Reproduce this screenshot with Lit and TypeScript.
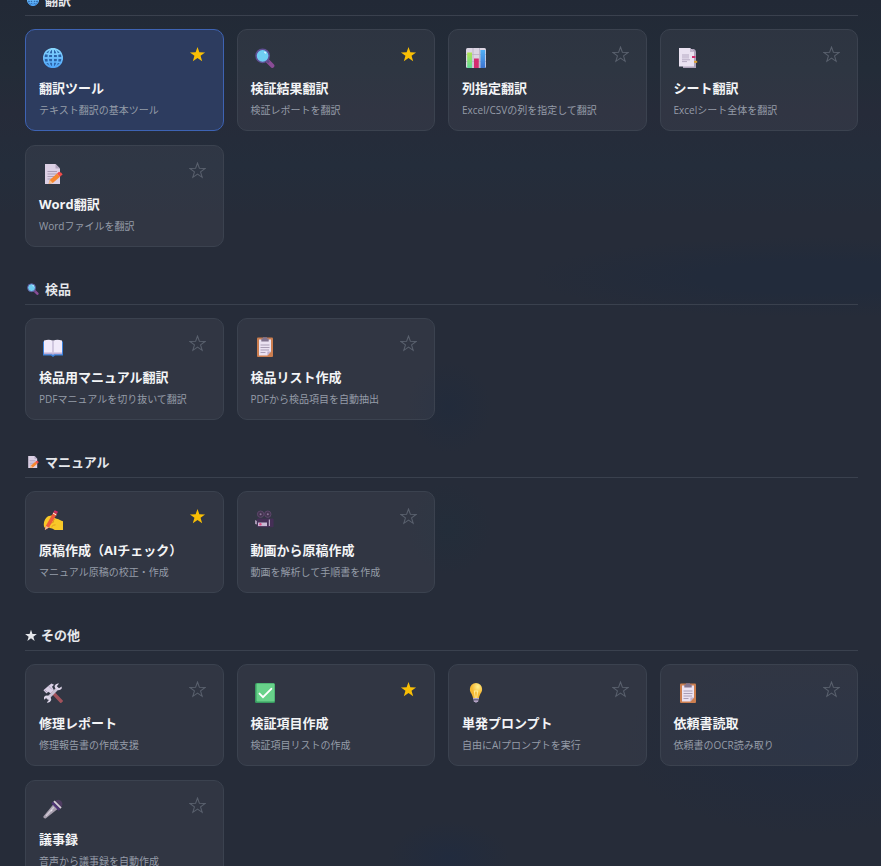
import { LitElement, html, css, svg } from "lit";
import { customElement, property, state } from "lit/decorators.js";
import { classMap } from "lit/directives/class-map.js";

const STAR = "10,1.2 12.2,7.4 18.9,7.6 13.6,11.6 15.5,18 10,14.2 4.5,18 6.4,11.6 1.1,7.6 7.8,7.4";

const icons: Record<string, unknown> = {
  globe: svg`
    <defs><linearGradient id="gl" x1="0" y1="0" x2="0" y2="1"><stop offset="0" stop-color="#86d6ff"/><stop offset="1" stop-color="#4fa6fa"/></linearGradient></defs>
    <circle cx="10" cy="10" r="9.4" fill="#2b62a8"/>
    <g fill="none" stroke="url(#gl)" stroke-width="1.6">
      <circle cx="10" cy="10" r="9.3"/><ellipse cx="10" cy="10" rx="4.8" ry="9.3"/>
      <path d="M1 10.01H19M2.4 5.4Q10 7.2 17.6 5.4M2.4 14.6Q10 12.8 17.6 14.6M10.01 1V19"/>
      <path d="M1 10H19V10.02M10 1V19H10.02"/>
    </g>`,
  search: svg`
    <path d="M12.6 13.1 17.3 17.8" stroke="#8a4c96" stroke-width="4.2" stroke-linecap="round"/>
    <path d="M12 12.6 14 14.4" stroke="#5d4a83" stroke-width="2.4"/>
    <circle cx="7.6" cy="7.8" r="6.6" fill="#6fcdf2" stroke="#604f95" stroke-width="1.5"/>
    <ellipse cx="10.2" cy="4.6" rx="1.3" ry=".8" fill="#d9f4ff" transform="rotate(35 10.2 4.6)"/>`,
  chart: svg`
    <defs><linearGradient id="cg" x1="0" y1="0" x2="0" y2="1"><stop offset="0" stop-color="#b0e34f"/><stop offset="1" stop-color="#5fdc9a"/></linearGradient>
    <linearGradient id="cb" x1="0" y1="0" x2="0" y2="1"><stop offset="0" stop-color="#4fb0f7"/><stop offset="1" stop-color="#3c73cf"/></linearGradient></defs>
    <rect width="20" height="20" rx="1.5" fill="#dcd5e3"/>
    <path d="M0 6.5H20M0 13.5H20M7 0V20M13.5 0V20" stroke="#b9afc4" stroke-width=".8"/>
    <rect x="1.2" y="4.5" width="4.8" height="15.5" fill="url(#cg)"/>
    <rect x="8" y="10.5" width="4.8" height="9.5" fill="#d42d70"/>
    <rect x="14.4" y="2" width="4.8" height="18" fill="url(#cb)"/>`,
  tabs: svg`
    <path d="M5 1H16Q18 2 18 4V20H5Z" fill="#afa3bb"/>
    <path d="M1 0H12L16 4V18.6H1Z" fill="#eae2f1"/>
    <path d="M12 0V4H16Z" fill="#c4b8cf"/>
    <rect x="4" y="6" width="7" height="4.6" fill="#cfc5d9"/>
    <path d="M4 11.8H12M4 13.6H9" stroke="#b7abc3"/>
    <rect x="14" y="8" width="3.4" height="2" fill="#d42d70"/><rect x="16" y="12.8" width="3.2" height="2" fill="#dba032"/>`,
  memo: svg`
    <path d="M2 0H12.5L17 4.5V20H2Z" fill="#dcd0e5"/>
    <path d="M12.5 0V4.5H17Z" fill="#b3a5c0"/>
    <path d="M4.5 7.5H14M4.5 10H14M4.5 12.5H12M4.5 15H9" stroke="#a99bb5"/>
    <path d="M5.6 19.8 6.8 16 14 9.6 17 12.8 9.8 19Z" fill="#f6862d"/>
    <path d="M14 9.6 16 7.8Q18.8 8.4 19.6 10.6L17 12.8Z" fill="#ef4c4a"/>
    <path d="M5.6 19.8 6.8 16 9.8 19Z" fill="#f4bf91"/>`,
  book: svg`
    <path d="M0 4.5H20V18.6H12L10 20 8 18.6H0Z" fill="#3b82dc"/>
    <path d="M1 3.5Q6 1.8 10 3.7Q14 1.8 19 3.5V16.6H1Z" fill="#f1eafa"/>
    <path d="M1 15.5H9L10 16.7 11 15.5H19V17.2H11L10 18 9 17.2H1Z" fill="#bdaed5"/>
    <path d="M9.2 3.6H10.8V16.5H9.2Z" fill="#cabfda"/>`,
  clipboard: svg`
    <rect x="2" y=".5" width="16" height="19.5" rx="1" fill="#cc7e4f"/>
    <path d="M4 2.6H16V14.6L12.4 18.4H4Z" fill="#ebe2f2"/>
    <path d="M16 14.6H12.4V18.4Z" fill="#bfafcd"/>
    <path d="M6.3 1.6H8V.2H12V1.6H13.7V4.6H6.3Z" fill="#83758f"/>
    <path d="M5.5 8H14.5M5.5 10.5H14.5M5.5 13H14M5.5 15.5H10.5" stroke="#aa9eb6"/>`,
  writing: svg`
    <path d="M1.3 17.4C-.2 13 1.6 8.8 5 6.3L9.6 5.2 10.4 7.4 13.6 8.7C16.3 9 17.7 10.6 20 11.2V20H11.8C8.4 17.3 4.4 17.6 1.3 17.4Z" fill="#f8c928"/>
    <path d="M5.6 15.2Q7.2 12.4 10.6 12.3M8.4 17Q10 14.7 12.5 14.8M12 8.7Q10 10 10.5 12" stroke="#df941e" stroke-width=".9" fill="none"/>
    <path d="M1.8 20 2.8 16 10.6 1.9 14 3.8 6 17.6Z" fill="#ed5b3b"/>
    <path d="M10.6 1.9 11.7.2 15 1.7 14 3.8Z" fill="#d12b65"/>
    <path d="M10 3.1 13.3 5" stroke="#f7ece8"/>
    <path d="M1.8 20 2.8 16 6 17.6Z" fill="#f2bc95"/>`,
  camera: svg`
    <circle cx="5.6" cy="4.2" r="3.2" fill="#443450" stroke="#5c466a"/><circle cx="12.8" cy="4.2" r="3.2" fill="#443450" stroke="#5c466a"/>
    <circle cx="5.6" cy="4.2" r="1" fill="#8a7797"/><circle cx="12.8" cy="4.2" r="1" fill="#8a7797"/>
    <rect x="2" y="8.6" width="16.6" height="8.6" rx="1" fill="#452f56"/>
    <path d="M0 10 2 11V14.5L0 14Z" fill="#a494b0"/><rect x="3" y="12.5" width="9" height="3.6" fill="#c9bad4"/>
    <path d="M13.8 9.5H15V16H13.8Z" fill="#b4a5c0"/>
    <circle cx="5.4" cy="14.2" r="1.2" fill="#dd4c83"/>`,
  tools: svg`
    <path d="M8 7.6 17.8 18" stroke="#a1525b" stroke-width="3.4" stroke-linecap="square"/>
    <path d="M.4 7.2 5.5 2.8 8.5.4 11 1.8 9 3.8 11 7.2 7.7 10.3 5 8.7 3.5 10.4Z" fill="#d9cfe5"/>
    <path d="M1.5 6.7 4.4 9.4M5.6 3.1 9 6.5" stroke="#a99ab6" stroke-width=".9"/>
    <path d="M4 16 14.7 5.3" stroke="#c8c1d3" stroke-width="3"/>
    <path d="M18.6 5.8A4.1 4.1 0 0 1 11.5 3A4 4 0 0 1 16 .5L13.8 3.2 16 5.2 18.8 3.4Z" fill="#ddd5e8"/>
    <path d="M1 14A4.1 4.1 0 0 1 8.2 16.9A4 4 0 0 1 3.8 19.6L5.9 16.9 3.6 14.8 1 16.7Z" fill="#ddd5e8"/>`,
  check: svg`
    <rect width="20" height="20" rx="1.5" fill="#399d61"/><rect x="1.5" y=".5" width="18" height="18" rx="1" fill="#68d28a"/>
    <path d="M4.5 10.6 8 14.2 16.3 5.8" fill="none" stroke="#fff" stroke-width="1.9" stroke-linecap="round"/>`,
  bulb: svg`
    <defs><radialGradient id="bu" cx=".65" cy=".25"><stop offset="0" stop-color="#fff08e"/><stop offset="1" stop-color="#f6b831"/></radialGradient></defs>
    <path d="M10 0A6.1 6.1 0 0 1 16.1 6.2C16.1 9.6 13.6 10.8 13 15H7C6.4 10.8 3.9 9.6 3.9 6.2A6.1 6.1 0 0 1 10 0Z" fill="url(#bu)"/>
    <path d="M8.3 8 9.3 15M11.7 8 10.7 15M8 8H12" stroke="#fff3aa" stroke-width=".8" fill="none"/>
    <path d="M7 15H13V16.4H7ZM7.4 17.2H12.6L12 19H11L10 20 9 19H8Z" fill="#b3a2c5"/>`,
  mic: svg`
    <path d="M.3 17.5 10.2 5.5 14.6 10 2.6 19.6Q.3 19.8.3 17.5Z" fill="#a79fae"/>
    <path d="M3 17 10.8 8.2" stroke="#d3ccd9" stroke-width="1.3"/><circle cx="8.6" cy="11.6" r=".8" fill="#ece6f0"/>
    <path d="M11.5 2.4Q15-.8 18.4 2.2Q20.8 5.5 17.6 8.8Z" fill="#4e3c61"/>
    <path d="M9.2 3.5 16.5 10.8" stroke="#503477" stroke-width="2.4"/>
    <path d="M11 2.2 18 9.2" stroke="#d7ced9" stroke-width="1.7"/>`,
  star: svg`<polygon points=${STAR} fill="currentColor" transform="translate(-1 0) scale(1.1)"/>`,
};

const icon = (name: string) =>
  html`<svg viewBox="0 0 20 20" aria-hidden="true">${icons[name]}</svg>`;

interface Tool { icon: string; title: string; desc: string; fav?: boolean; active?: boolean }
interface Group { icon: string; name: string; tools: Tool[] }

const groups: Group[] = [
  { icon: "globe", name: "翻訳", tools: [
    { icon: "globe", title: "翻訳ツール", desc: "テキスト翻訳の基本ツール", fav: true, active: true },
    { icon: "search", title: "検証結果翻訳", desc: "検証レポートを翻訳", fav: true },
    { icon: "chart", title: "列指定翻訳", desc: "Excel/CSVの列を指定して翻訳" },
    { icon: "tabs", title: "シート翻訳", desc: "Excelシート全体を翻訳" },
    { icon: "memo", title: "Word翻訳", desc: "Wordファイルを翻訳" },
  ] },
  { icon: "search", name: "検品", tools: [
    { icon: "book", title: "検品用マニュアル翻訳", desc: "PDFマニュアルを切り抜いて翻訳" },
    { icon: "clipboard", title: "検品リスト作成", desc: "PDFから検品項目を自動抽出" },
  ] },
  { icon: "memo", name: "マニュアル", tools: [
    { icon: "writing", title: "原稿作成（AIチェック）", desc: "マニュアル原稿の校正・作成", fav: true },
    { icon: "camera", title: "動画から原稿作成", desc: "動画を解析して手順書を作成" },
  ] },
  { icon: "star", name: "その他", tools: [
    { icon: "tools", title: "修理レポート", desc: "修理報告書の作成支援" },
    { icon: "check", title: "検証項目作成", desc: "検証項目リストの作成", fav: true },
    { icon: "bulb", title: "単発プロンプト", desc: "自由にAIプロンプトを実行" },
    { icon: "clipboard", title: "依頼書読取", desc: "依頼書のOCR読み取り" },
    { icon: "mic", title: "議事録", desc: "音声から議事録を自動作成" },
  ] },
];

@customElement("tool-card")
class ToolCard extends LitElement {
  @property({ attribute: false }) tool!: Tool;
  @state() private fav = false;

  static styles = css`
    :host { display: block; position: relative; }
    button { font: inherit; color: inherit; border: 0; background: none; cursor: pointer; }
    .card {
      display: flex; flex-direction: column; box-sizing: border-box; width: 100%;
      padding: 13px; text-align: left;
      border: 1px solid #3b424f; border-radius: 10px; background: rgba(255, 255, 255, 0.05);
    }
    .card.active { background: #2d3c5f; border-color: #3e63b3; }
    .icon { display: flex; align-items: center; height: 30px; padding-left: 4px; margin-bottom: 6px; }
    .icon svg { width: 20px; height: 20px; }
    .title { font-size: 13px; line-height: 18px; font-weight: 700; color: #f3f4f6; margin-bottom: 6px; white-space: nowrap; }
    .desc { font-size: 10px; line-height: 14px; color: #959ca8; white-space: nowrap; }
    .fav { position: absolute; top: 13px; right: 14px; padding: 4px; display: flex; color: #59606d; }
    .fav svg { width: 17px; height: 17px; }
    .fav polygon { fill: none; stroke: currentColor; stroke-width: 1.2; }
    .fav.on { color: #f9bf05; }
    .fav.on polygon { fill: currentColor; stroke: none; }
  `;

  willUpdate(changed: Map<string, unknown>) {
    if (changed.has("tool")) this.fav = !!this.tool.fav;
  }

  render() {
    const t = this.tool;
    return html`
      <button class=${classMap({ card: true, active: !!t.active })}>
        <span class="icon">${icon(t.icon)}</span>
        <span class="title">${t.title}</span>
        <span class="desc">${t.desc}</span>
      </button>
      <button class=${classMap({ fav: true, on: this.fav })} aria-label="お気に入り"
        aria-pressed=${this.fav} @click=${() => (this.fav = !this.fav)}>
        <svg viewBox="0 0 20 20" aria-hidden="true"><polygon points=${STAR}></polygon></svg>
      </button>`;
  }
}

@customElement("app-root")
class AppRoot extends LitElement {
  static styles = css`
    :host {
      display: block; height: 100vh; overflow: hidden;
      font-family: "Open Sans", "Noto Sans CJK JP", sans-serif;
      background:
        radial-gradient(ellipse 42px 46px at 51% 47%, #222b3b, transparent),
        radial-gradient(ellipse 42px 46px at 51% 61%, #232d3a, transparent),
        radial-gradient(ellipse 60px 36px at 51% 99%, #212b3e, transparent),
        radial-gradient(ellipse 280px 40px at 92% 32%, #222b3b 40%, transparent),
        radial-gradient(ellipse 190px 90px at 92% 86%, #222b3d, transparent),
        linear-gradient(#222936 0, #232c38 8%, #262b39 13%, #242d3b 19%, #262c39 25%, #262c39 100%);
    }
    main { padding: 0 23px 32px 25px; margin-top: -9px; }
    section { margin-bottom: 33px; }
    h2 {
      display: flex; align-items: center; gap: 4px; margin: 0 0 13px; padding-bottom: 6px;
      border-bottom: 1px solid #3a414e; font-size: 13px; line-height: 18px; font-weight: 700; color: #e5e7eb;
    }
    .mark { display: flex; justify-content: center; width: 16px; }
    .mark.star { width: 12px; }
    .mark svg { width: 12px; height: 12px; }
    .grid { display: grid; grid-template-columns: repeat(4, minmax(0, 1fr)); gap: 14px 13px; }
  `;

  render() {
    return html`<main lang="ja">
      ${groups.map((g) => html`
        <section>
          <h2><span class=${classMap({ mark: true, star: g.icon === "star" })}>${icon(g.icon)}</span>${g.name}</h2>
          <div class="grid">${g.tools.map((t) => html`<tool-card .tool=${t}></tool-card>`)}</div>
        </section>`)}
    </main>`;
  }
}
